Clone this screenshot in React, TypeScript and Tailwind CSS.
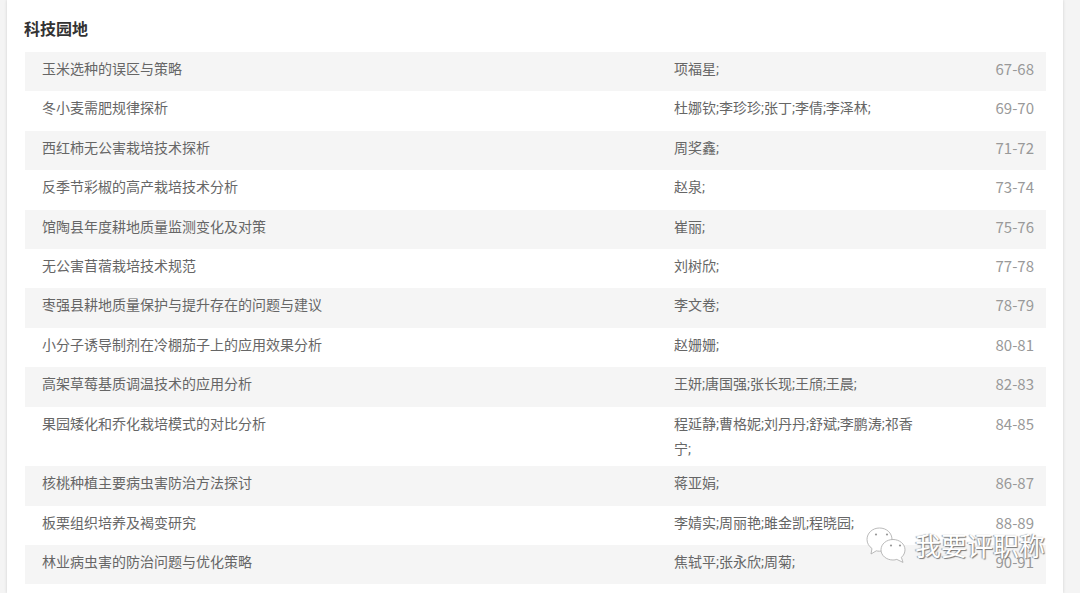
const rows = [
  { title: '玉米选种的误区与策略', authors: '项福星;', pages: '67-68' },
  { title: '冬小麦需肥规律探析', authors: '杜娜钦;李珍珍;张丁;李倩;李泽林;', pages: '69-70' },
  { title: '西红柿无公害栽培技术探析', authors: '周奖鑫;', pages: '71-72' },
  { title: '反季节彩椒的高产栽培技术分析', authors: '赵泉;', pages: '73-74' },
  { title: '馆陶县年度耕地质量监测变化及对策', authors: '崔丽;', pages: '75-76' },
  { title: '无公害苜蓿栽培技术规范', authors: '刘树欣;', pages: '77-78' },
  { title: '枣强县耕地质量保护与提升存在的问题与建议', authors: '李文卷;', pages: '78-79' },
  { title: '小分子诱导制剂在冷棚茄子上的应用效果分析', authors: '赵姗姗;', pages: '80-81' },
  { title: '高架草莓基质调温技术的应用分析', authors: '王妍;唐国强;张长现;王頎;王晨;', pages: '82-83' },
  { title: '果园矮化和乔化栽培模式的对比分析', authors: '程延静;曹格妮;刘丹丹;舒斌;李鹏涛;祁香宁;', pages: '84-85' },
  { title: '核桃种植主要病虫害防治方法探讨', authors: '蒋亚娟;', pages: '86-87' },
  { title: '板栗组织培养及褐变研究', authors: '李婧实;周丽艳;雎金凯;程晓园;', pages: '88-89' },
  { title: '林业病虫害的防治问题与优化策略', authors: '焦轼平;张永欣;周菊;', pages: '90-91' },
]

function WechatMark() {
  return (
    <svg width="40" height="36" viewBox="0 0 40 36" fill="none" stroke="#a8a8a8" strokeWidth="0.8">
      <path d="M13.500 1C6.500 1 1 6 1 12.500c0 3.800 2 6.900 5 9l-1 5.500 5.300-3.200c1.100.3 2.200.4 3.200.4 7 0 12.500-5 12.500-11.700C26 6 20.500 1 13.500 1z" fill="#fff" />
      <path d="M27 12.500c-6.500 0-12 4.500-12 10.300S20.500 33 27 33c1.300 0 2.600-.2 3.800-.6l6.200 3-1.600-5.100c2.200-1.800 3.600-4.500 3.600-7.500 0-5.800-5.500-10.300-12-10.300z" fill="#fff" />
      <circle cx="10" cy="7.500" r="1.100" fill="#999" stroke="none" />
      <circle cx="21" cy="7.500" r="1.100" fill="#999" stroke="none" />
      <circle cx="25" cy="18.500" r="1.100" fill="#999" stroke="none" />
      <circle cx="34" cy="18.500" r="1.100" fill="#999" stroke="none" />
    </svg>
  )
}

export default function App() {
  return (
    <div className="relative h-[593px] w-[1080px] overflow-hidden bg-[#f4f4f4] font-['Noto_Sans_CJK_SC','Liberation_Sans',sans-serif]">
      <div className="ml-[7px] h-full w-[1056px] bg-white pl-[18px] pr-[17px] shadow-[0_0_3px_rgba(0,0,0,0.15)]">
        <h2 className="ml-[-1px] pt-[16px] text-base leading-6 font-bold text-[#333]">科技园地</h2>
        <div className="mt-[12px]">
          {rows.map((row) => (
            <div
              key={row.pages}
              className="flex min-h-[39.4px] pt-[4px] pb-[5.6px] text-sm leading-[25px] text-[#666] odd:bg-[#f5f5f5]"
            >
              <div className="w-[649px] pl-[17px]">{row.title}</div>
              <div className="-mb-px w-[245px] pt-px font-['Roboto','Noto_Sans_CJK_SC',sans-serif]">{row.authors}</div>
              <div className="flex-1 pr-3 text-right text-[15px] text-[#999]">{row.pages}</div>
            </div>
          ))}
        </div>
      </div>

      <div className="absolute top-[527px] left-[866px] flex items-center gap-[9px]">
        <WechatMark />
        <span className="text-[26px] leading-[36px] text-white [text-shadow:1px_1px_1px_#777,-1px_0_1px_#999]">
          我要评职称
        </span>
      </div>
    </div>
  )
}
